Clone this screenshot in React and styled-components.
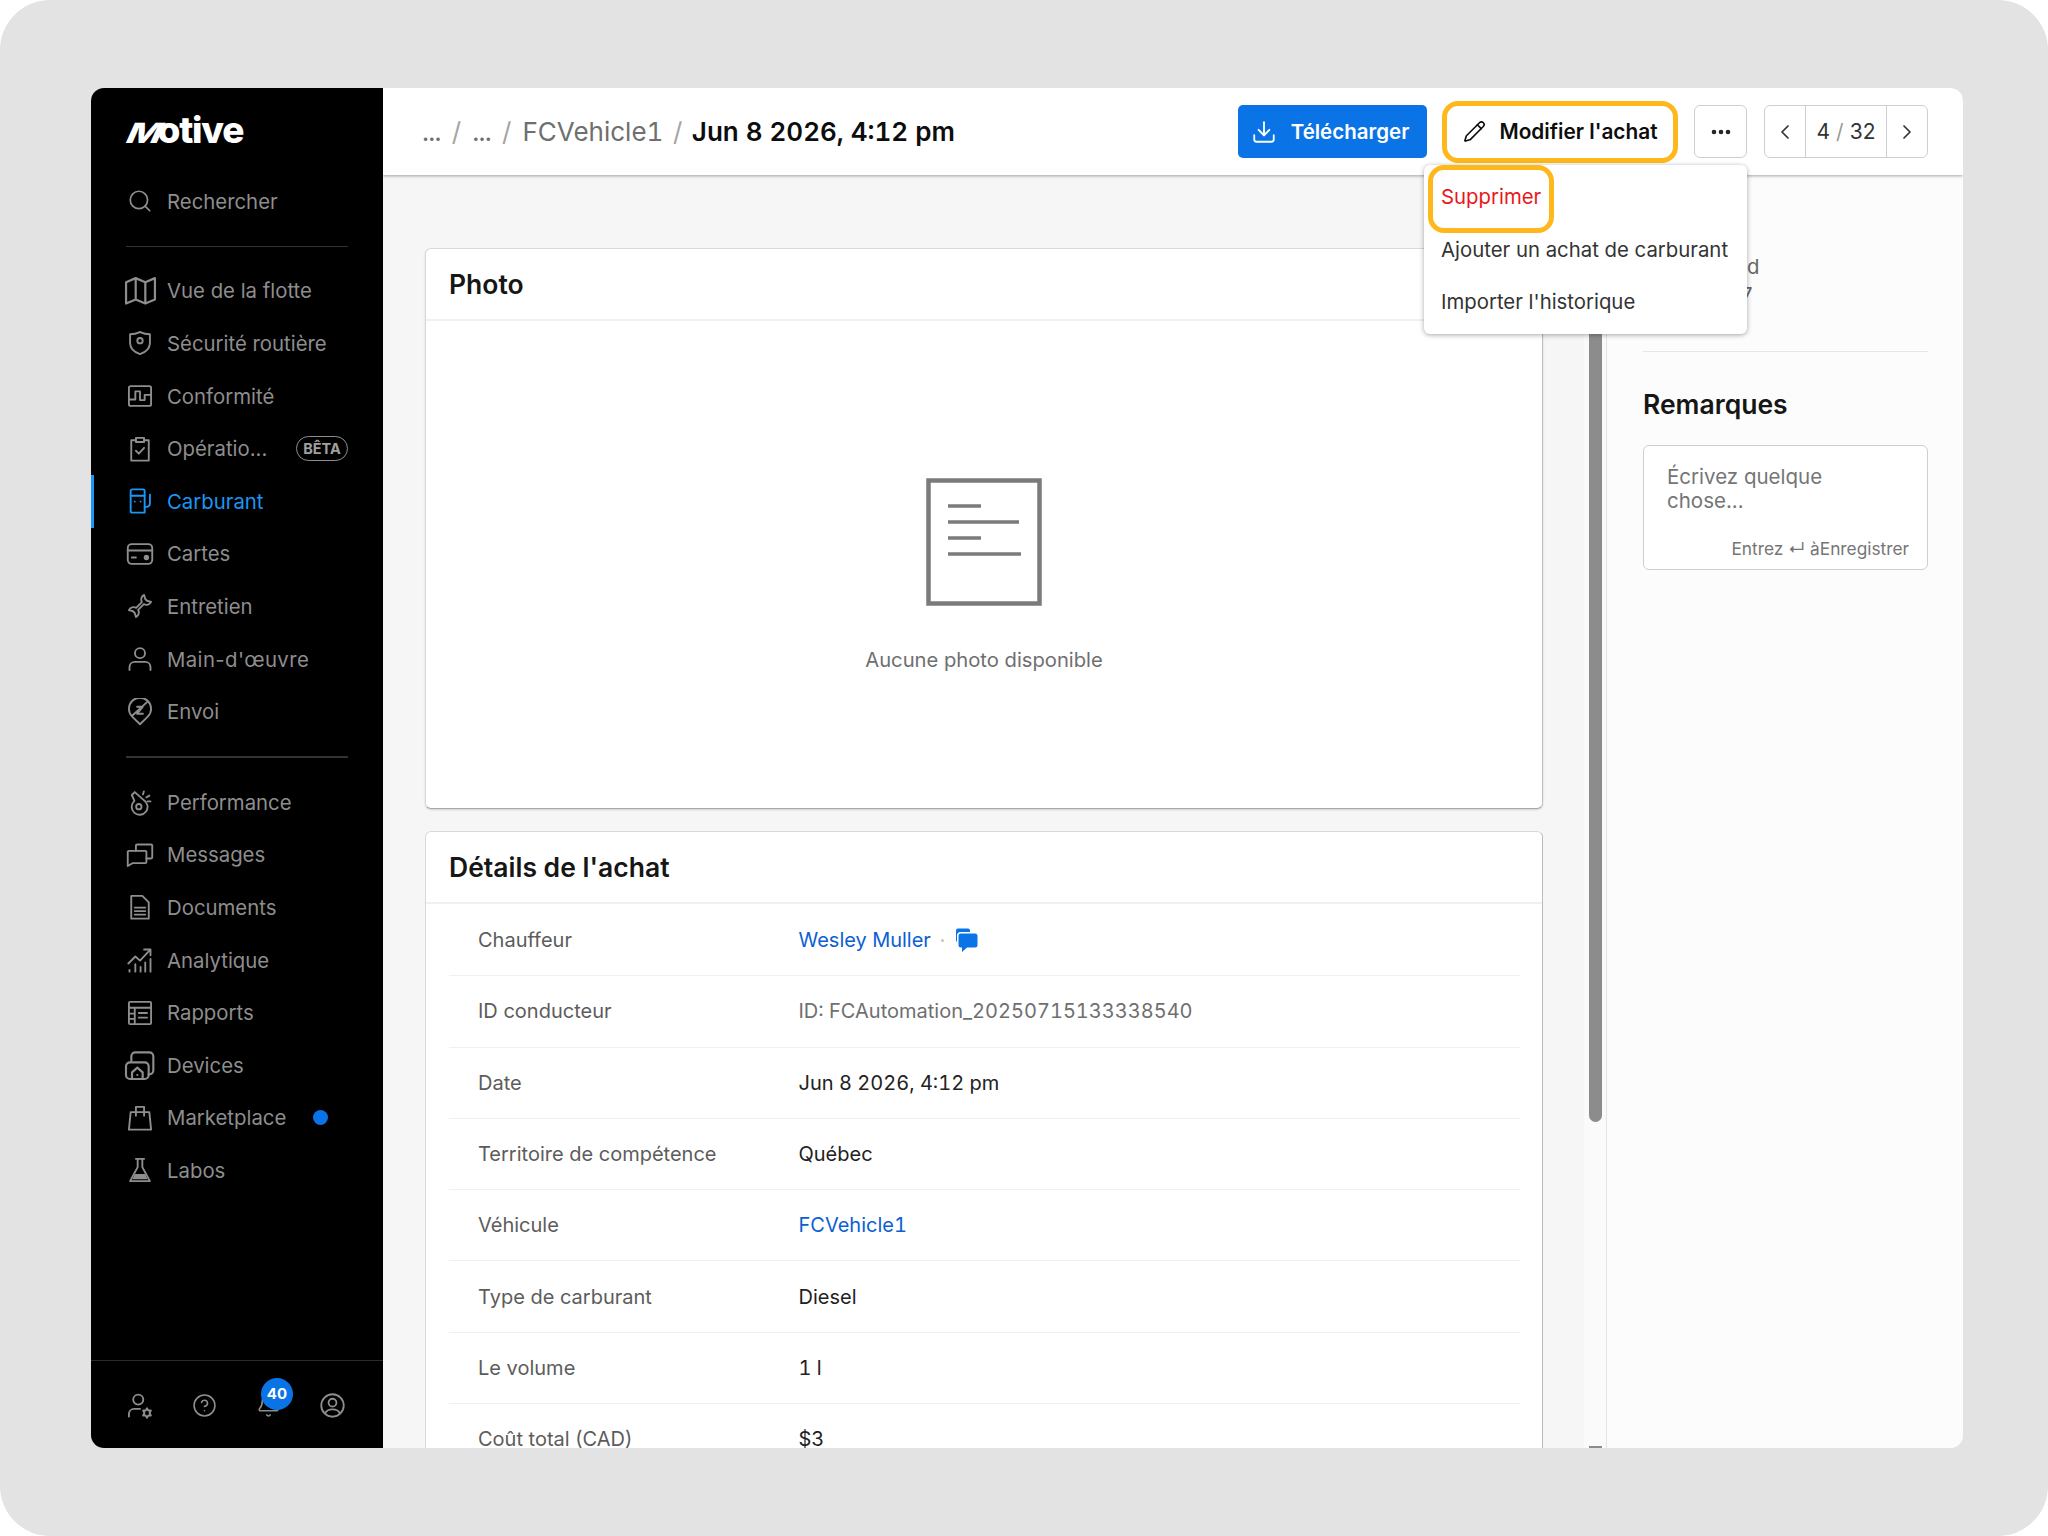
import React from "react";
import styled, { createGlobalStyle } from "styled-components";
import { Search, ChevronLeft, ChevronRight, Ellipsis, Pencil, Download, CircleHelp, Bell } from "lucide-react";

const GlobalStyle = createGlobalStyle`
  html, body { margin: 0; padding: 0; background: #ffffff; }
  body { font-family: Inter, "Noto Sans", "Liberation Sans", sans-serif; }
  * { box-sizing: border-box; }
`;

const Icon = ({ children, size = 28 }) => (
  <svg width={size} height={size} viewBox="0 0 24 24" fill="none" stroke="currentColor" strokeWidth="1.6" strokeLinecap="round" strokeLinejoin="round" style={{ flexShrink: 0 }}>
    {children}
  </svg>
);

const icons = {
  map: (
    <path d="M1.5 6 8.5 3l7 3 7-3v15.5l-7 3-7-3-7 3ZM8.5 3v15.5M15.5 6v15.5" />
  ),
  shield: (
    <>
      <path d="M3.5 4.5C9 4.5 10 3.500 12 2.500c2 1 3 2 8.500 2V12c0 5-4 8-8.500 9.500C7.500 20 3.500 17 3.500 12Z" />
      <circle cx="12" cy="10" r="2.300" />
    </>
  ),
  compliance: (
    <>
      <rect x="2.500" y="3.500" width="19" height="17" rx="1.500" />
      <path d="M2.500 15H8V8h4v7.500h4V11h5.500" />
    </>
  ),
  clipboard: (
    <>
      <path d="M8.500 4.500H4.500V22h15V4.500h-4" />
      <path d="M8.500 2.500h7v3.500h-7Z" />
      <path d="m8.500 13.500 2.500 2.500 4.500-5" />
    </>
  ),
  fuel: (
    <>
      <path d="M4 3.500A1.500 1.500 0 0 1 5.500 2h9A1.500 1.500 0 0 1 16 3.500V22H5.500A1.500 1.500 0 0 1 4 20.500Z" />
      <path d="M4 7.500h12M7.500 12.500h.01M12.500 12.500h.01" />
      <path d="M16 17h1.500c2 0 3-1 3-3V6.500" />
    </>
  ),
  card: (
    <>
      <rect x="1.500" y="3.500" width="21" height="17" rx="3.500" />
      <path d="M1.500 9h21M5 15h3.500" />
      <circle cx="17.500" cy="15" r="1.500" fill="currentColor" />
    </>
  ),
  wrench: (
    <path d="M15.500 2.500A4.500 4.500 0 0 0 13.580 8.720L8.720 13.580A4.500 4.500 0 0 0 2.500 15.500L6 16.500L7.500 18L8.500 21.500A4.500 4.500 0 0 0 10.420 15.280L15.280 10.420A4.500 4.500 0 0 0 21.500 8.500L18 7.500L16.500 6Z" />
  ),
  user: (
    <>
      <circle cx="12" cy="7" r="4.300" />
      <path d="M3 21.500V19c0-2.800 2-4.500 4.500-4.500h9c2.500 0 4.500 1.700 4.500 4.500v2.500" />
    </>
  ),
  dispatch: (
    <>
      <path d="M12 22.500 5.300 16A9.500 9.500 0 1 1 18.700 16Z" />
      <path d="M9.500 7.500h5l-5 6h5M5.500 15 18 3.500" />
    </>
  ),
  performance: (
    <>
      <path d="M5 6 7.500 3.500 15 10.200A6.800 6.800 0 1 1 7.200 11Z" />
      <circle cx="11" cy="16" r="2.300" />
      <path d="m14.500 5.500.8-2.500M17.500 8l2.500-1.500M18.500 11.500h2.500" />
    </>
  ),
  messages: (
    <>
      <path d="M8.500 8.500V4a1 1 0 0 1 1-1h12a1 1 0 0 1 1 1v10a1 1 0 0 1-1 1H17.500" />
      <path d="M2.500 8.500h14a1 1 0 0 1 1 1V18a1 1 0 0 1-1 1H5.500l-4 2.500v-12a1 1 0 0 1 1-1Z" />
    </>
  ),
  documents: (
    <>
      <path d="M4.500 2.500H14l5.500 5.500v14h-15Z" />
      <path d="M7.500 12.500h9M7.500 15.500h9M7.500 18.500h9" />
    </>
  ),
  analytics: (
    <>
      <path d="M2 15 8 9l4 3.500L20.500 3.500M15.500 3h5.500v5" />
      <path d="M3 20.500v1.500M8 15.500V22M12.500 18v4M16.500 14v8M21 11v11" />
    </>
  ),
  reports: (
    <>
      <rect x="2.500" y="2.500" width="19" height="19" rx="1" />
      <path d="M2.500 7.500h19M7.500 7.500v14M2.500 12.500h5M2.500 17h5M11 12h7M11 16h7" />
    </>
  ),
  devices: (
    <>
      <path d="M5.500 9V5.500A3 3 0 0 1 8.500 2.500H19A3 3 0 0 1 22 5.500V16a3 3 0 0 1-3 3h-.5" />
      <rect x="1.500" y="10" width="17" height="12.500" rx="3" />
      <path d="M6 22.500v-5l4-3.500 4 3.500v5" />
      <path d="M10 19.500h.01" />
    </>
  ),
  bag: (
    <>
      <path d="M4 7h16l1.500 15h-19Z" />
      <path d="M8.500 10V2.500h7V10" />
    </>
  ),
  flask: (
    <>
      <path d="M8.500 2.500h7M10 2.500v7L3.500 21.500h17L14 9.500v-7" />
      <path d="M7.500 15.500h9l2 4.500h-13Z" fill="currentColor" stroke="none" />
    </>
  ),
  userGear: (
    <>
      <circle cx="10.500" cy="6.500" r="4.300" />
      <path d="M2.500 21v-2c0-2.800 2-4.500 4.500-4.500h5" />
      <path d="m18 14 1.100 1.900h2.200l-1.100 2.100 1.100 2.100h-2.200L18 22l-1.100-1.900h-2.200l1.100-2.100-1.100-2.100h2.200Z" />
    </>
  ),
  userCircle: (
    <>
      <circle cx="12" cy="12" r="10" />
      <circle cx="12" cy="9.500" r="3.500" />
      <path d="M5.500 19c1-2.500 3-3.500 6.500-3.500s5.500 1 6.500 3.500" />
    </>
  ),
};

const firstNav = [
  { icon: "map", label: "Vue de la flotte", size: 33 },
  { icon: "shield", label: "Sécurité routière" },
  { icon: "compliance", label: "Conformité" },
  { icon: "clipboard", label: "Opératio...", beta: true },
  { icon: "fuel", label: "Carburant", active: true },
  { icon: "card", label: "Cartes" },
  { icon: "wrench", label: "Entretien" },
  { icon: "user", label: "Main-d'œuvre", wideHyphen: true },
  { icon: "dispatch", label: "Envoi" },
];

const secondNav = [
  { icon: "performance", label: "Performance" },
  { icon: "messages", label: "Messages" },
  { icon: "documents", label: "Documents" },
  { icon: "analytics", label: "Analytique" },
  { icon: "reports", label: "Rapports" },
  { icon: "devices", label: "Devices", size: 32 },
  { icon: "bag", label: "Marketplace", dot: true },
  { icon: "flask", label: "Labos" },
];

const details = [
  { label: "Chauffeur", value: "Wesley Muller", kind: "link", chat: true },
  { label: "ID conducteur", value: "ID: FCAutomation_20250715133338540", kind: "muted" },
  { label: "Date", value: "Jun 8 2026, 4:12 pm" },
  { label: "Territoire de compétence", value: "Québec" },
  { label: "Véhicule", value: "FCVehicle1", kind: "link" },
  { label: "Type de carburant", value: "Diesel" },
  { label: "Le volume", value: "1 l" },
  { label: "Coût total (CAD)", value: "$3" },
];

const NavList = ({ items }) => (
  <div>
    {items.map((item) => (
      <NavItem key={item.label} $active={item.active}>
        <IconSlot>
          <Icon size={item.size}>{icons[item.icon]}</Icon>
        </IconSlot>
        <NavLabel $wideHyphen={item.wideHyphen}>{item.label}</NavLabel>
        {item.beta && <BetaTag>BÊTA</BetaTag>}
        {item.dot && <BlueDot />}
      </NavItem>
    ))}
  </div>
);

export default function App() {
  return (
    <Page>
      <GlobalStyle />
      <AppWindow>
        <Sidebar>
          <Logo>
            <LogoM>M</LogoM>otive
          </Logo>
          <NavItem>
            <IconSlot>
              <Search size={26} strokeWidth={1.6} />
            </IconSlot>
            <NavLabel>Rechercher</NavLabel>
          </NavItem>
          <NavDivider />
          <NavList items={firstNav} />
          <NavDivider $thick />
          <NavList items={secondNav} />
          <SidebarFooter>
            <FooterIcon>
              <Icon>{icons.userGear}</Icon>
            </FooterIcon>
            <FooterIcon>
              <CircleHelp size={25} strokeWidth={1.5} />
            </FooterIcon>
            <FooterIcon>
              <Bell size={25} strokeWidth={1.5} />
              <CountBadge>40</CountBadge>
            </FooterIcon>
            <FooterIcon>
              <Icon size={27}>{icons.userCircle}</Icon>
            </FooterIcon>
          </SidebarFooter>
        </Sidebar>

        <Main>
          <TopBar>
            <Breadcrumbs>
              <Dots>...</Dots>
              <Slash>/</Slash>
              <Dots>...</Dots>
              <Slash>/</Slash>
              <Crumb>FCVehicle1</Crumb>
              <Slash $tight>/</Slash>
              <CurrentCrumb>Jun 8 2026, 4:12 pm</CurrentCrumb>
            </Breadcrumbs>
            <Actions>
              <PrimaryButton>
                <Download size={26} strokeWidth={1.7} />
                Télécharger
              </PrimaryButton>
              <EditWrap>
                <EditButton>
                  <Pencil size={23} strokeWidth={1.7} />
                  Modifier l'achat
                </EditButton>
                <Menu>
                  <MenuItem $danger>Supprimer</MenuItem>
                  <MenuItem>Ajouter un achat de carburant</MenuItem>
                  <MenuItem>Importer l'historique</MenuItem>
                </Menu>
              </EditWrap>
              <MoreButton>
                <Ellipsis size={24} strokeWidth={2.6} />
              </MoreButton>
              <Pager>
                <PagerArrow>
                  <ChevronLeft size={24} strokeWidth={1.7} />
                </PagerArrow>
                <PagerCount>
                  4 <PagerSlash>/</PagerSlash> 32
                </PagerCount>
                <PagerArrow>
                  <ChevronRight size={24} strokeWidth={1.7} />
                </PagerArrow>
              </Pager>
            </Actions>
          </TopBar>

          <Body>
            <ScrollArea>
              <PhotoCard>
                <CardHeader>Photo</CardHeader>
                <PhotoBody>
                  <svg width="116" height="128" viewBox="0 0 116 128" fill="none" stroke="#7b7b7b">
                    <rect x="2.500" y="2.500" width="111" height="123" strokeWidth="4.500" />
                    <path d="M22 28h33M22 44h71M22 60h33M22 76h73" strokeWidth="3.500" />
                  </svg>
                  <PhotoCaption>Aucune photo disponible</PhotoCaption>
                </PhotoBody>
              </PhotoCard>
              <DetailsCard>
                <CardHeader>Détails de l'achat</CardHeader>
                <DetailRows>
                  {details.map((row) => (
                    <DetailRow key={row.label}>
                      <DetailLabel>{row.label}</DetailLabel>
                      <DetailValue $kind={row.kind}>{row.value}</DetailValue>
                      {row.chat && (
                        <>
                          <MiniDot />
                          <svg width="24" height="24" viewBox="0 0 24 24" fill="#0a74e6">
                            <path d="M2 2.500A2 2 0 0 1 4 .5h10a2 2 0 0 1 2 2V4H6.500A3.500 3.500 0 0 0 3 7.500V14a2 2 0 0 1-1-1.700Z" />
                            <path d="M7 5.500h14a2.500 2.500 0 0 1 2.500 2.500v9a2.500 2.500 0 0 1-2.500 2.500H13L8 24v-4.500H7A2.500 2.500 0 0 1 4.500 17V8A2.500 2.500 0 0 1 7 5.500Z" />
                          </svg>
                        </>
                      )}
                    </DetailRow>
                  ))}
                </DetailRows>
              </DetailsCard>
            </ScrollArea>

            <ScrollTrack>
              <ScrollThumb />
              <ScrollStub />
            </ScrollTrack>

            <SidePanel>
              <HiddenMeta>
                <MetaLine $indent={104}>d</MetaLine>
                <MetaLine $indent={98}>7</MetaLine>
              </HiddenMeta>
              <PanelDivider />
              <PanelTitle>Remarques</PanelTitle>
              <NoteBox>
                <NotePlaceholder>Écrivez quelque chose...</NotePlaceholder>
                <NoteHint>Entrez ↵ àEnregistrer</NoteHint>
              </NoteBox>
            </SidePanel>
          </Body>
        </Main>
      </AppWindow>
    </Page>
  );
}

const Page = styled.div`
  width: 2048px;
  height: 1536px;
  background: #e3e3e3;
  border-radius: 50px;
  padding: 88px 85px 88px 91px;
`;

const AppWindow = styled.div`
  display: flex;
  height: 100%;
  border-radius: 13px;
  overflow: hidden;
  background: #fcfcfc;
`;

const Sidebar = styled.aside`
  width: 292px;
  flex-shrink: 0;
  display: flex;
  flex-direction: column;
  background: #000000;
  color: #8e8e8e;
`;

const Logo = styled.div`
  height: 87px;
  padding: 22px 0 0 31px;
  color: #ffffff;
  font-size: 37px;
  line-height: 40px;
  font-weight: 800;
  letter-spacing: -1.2px;
`;

const LogoM = styled.span`
  display: inline-block;
  font-size: 28px;
  line-height: 28px;
  letter-spacing: 0;
  transform: skewX(-24deg) scaleX(1.32);
  transform-origin: left bottom;
  margin-right: 9px;
`;

const NavItem = styled.div`
  position: relative;
  display: flex;
  align-items: center;
  gap: 13px;
  height: 52.600px;
  padding-left: 35px;
  padding-right: 35px;
  font-size: 20.350px;
  color: ${(p) => (p.$active ? "#1a96f5" : "#8e8e8e")};

  ${(p) =>
    p.$active &&
    `&::before {
      content: "";
      position: absolute;
      left: 0;
      top: 0;
      bottom: 0;
      width: 3px;
      background: #1a96f5;
    }`}
`;

const IconSlot = styled.span`
  width: 28px;
  height: 28px;
  display: flex;
  align-items: center;
  justify-content: center;
  flex-shrink: 0;
`;

const NavLabel = styled.span`
  flex: 1;
  white-space: nowrap;
  letter-spacing: ${(p) => (p.$wideHyphen ? "0.4px" : "normal")};
`;

const BetaTag = styled.span`
  width: 52px;
  height: 25px;
  display: flex;
  align-items: center;
  justify-content: center;
  border: 1px solid #8e8e8e;
  border-radius: 13px;
  font-size: 14.500px;
  font-weight: 700;
  color: #a0a0a0;
`;

const BlueDot = styled.span`
  width: 15px;
  height: 15px;
  margin-right: 20px;
  border-radius: 50%;
  background: #0a74e6;
`;

const NavDivider = styled.div`
  height: ${(p) => (p.$thick ? "2px" : "1px")};
  margin: 18px 35px;
  background: #333333;
`;

const SidebarFooter = styled.div`
  margin-top: auto;
  height: 88px;
  display: flex;
  align-items: center;
  gap: 38px;
  padding: 2px 0 0 36px;
  border-top: 1px solid #2a2a2a;
`;

const FooterIcon = styled.span`
  position: relative;
  width: 26px;
  height: 28px;
  display: flex;
  align-items: center;
  justify-content: center;
`;

const CountBadge = styled.span`
  position: absolute;
  left: 6px;
  top: -14px;
  width: 32px;
  height: 32px;
  display: flex;
  align-items: center;
  justify-content: center;
  border-radius: 50%;
  background: #0a74e6;
  color: #ffffff;
  font-size: 15px;
  font-weight: 700;
`;

const Main = styled.main`
  flex: 1;
  min-width: 0;
  display: flex;
  flex-direction: column;
`;

const TopBar = styled.header`
  position: relative;
  z-index: 2;
  height: 87px;
  flex-shrink: 0;
  display: flex;
  align-items: center;
  justify-content: space-between;
  padding: 0 35px 0 39px;
  background: #ffffff;
  box-shadow: 0 1px 3px rgba(0, 0, 0, 0.35);
`;

const Breadcrumbs = styled.nav`
  display: flex;
  align-items: center;
  font-size: 26px;
  font-variant-numeric: tabular-nums;
`;

const Crumb = styled.span`
  color: #6f6f6f;
`;

const Dots = styled(Crumb)`
  letter-spacing: -0.7px;
`;

const Slash = styled.span`
  margin: 0 ${(p) => (p.$tight ? "9.500px" : "11px")};
  color: #a5a5a5;
`;

const CurrentCrumb = styled.span`
  color: #0d0d0d;
  font-weight: 600;
`;

const Actions = styled.div`
  display: flex;
  align-items: center;
`;

const PrimaryButton = styled.button`
  height: 53px;
  width: 189px;
  display: flex;
  align-items: center;
  justify-content: center;
  gap: 14px;
  padding: 0 5px 0 0;
  border: 0;
  border-radius: 5px;
  background: #0a74e6;
  color: #ffffff;
  font-family: inherit;
  font-size: 20.500px;
  font-weight: 600;
`;

const EditWrap = styled.div`
  position: relative;
  margin: 0 16px 0 15px;
`;

const EditButton = styled.button`
  width: 236px;
  height: 62px;
  display: flex;
  align-items: center;
  justify-content: center;
  gap: 14px;
  border: 5px solid #ffb81c;
  border-radius: 16px;
  background: #ffffff;
  color: #0d0d0d;
  font-family: inherit;
  font-size: 20.800px;
  font-weight: 600;
`;

const Menu = styled.div`
  position: absolute;
  z-index: 5;
  left: -18px;
  top: 64px;
  width: 323px;
  height: 169px;
  padding-top: 6px;
  background: #ffffff;
  border-radius: 6px;
  box-shadow: 0 1px 5px rgba(0, 0, 0, 0.35);
`;

const MenuItem = styled.div`
  position: relative;
  display: flex;
  align-items: center;
  height: 52.400px;
  padding-left: 17px;
  font-size: 20.350px;
  color: ${(p) => (p.$danger ? "#e8161a" : "#333333")};

  ${(p) =>
    p.$danger &&
    `&::after {
      content: "";
      box-sizing: border-box;
      position: absolute;
      left: 4px;
      top: -6px;
      width: 126px;
      height: 68px;
      border: 5px solid #ffb81c;
      border-radius: 16px;
    }`}
`;

const MoreButton = styled.button`
  width: 53px;
  height: 53px;
  display: flex;
  align-items: center;
  justify-content: center;
  background: #ffffff;
  border: 1px solid #cfcfcf;
  border-radius: 6px;
  color: #222222;
`;

const Pager = styled.div`
  width: 164px;
  height: 53px;
  margin-left: 17px;
  display: flex;
  border: 1px solid #cfcfcf;
  border-radius: 6px;
`;

const PagerArrow = styled.span`
  width: 40px;
  display: flex;
  align-items: center;
  justify-content: center;
  color: #333333;
`;

const PagerCount = styled.span`
  flex: 1;
  display: flex;
  align-items: center;
  justify-content: center;
  gap: 6px;
  border-left: 1px solid #cfcfcf;
  border-right: 1px solid #cfcfcf;
  font-size: 21px;
  color: #333333;
`;

const PagerSlash = styled.span`
  color: #9a9a9a;
`;

const Body = styled.div`
  flex: 1;
  min-height: 0;
  display: flex;
`;

const ScrollArea = styled.div`
  width: 1201px;
  flex-shrink: 0;
  padding: 73px 41px 0 42px;
  background: #f6f6f6;
  overflow: hidden;
`;

const Card = styled.section`
  background: #ffffff;
  border: 1px solid #d9d9d9;
  border-right-color: #bdbdbd;
  border-radius: 6px;
`;

const PhotoCard = styled(Card)`
  height: 561px;
  border-bottom-color: #a8a8a8;
  box-shadow: 0 1px 2px rgba(0, 0, 0, 0.15);
`;

const DetailsCard = styled(Card)`
  margin-top: 22px;
`;

const CardHeader = styled.h2`
  height: 72px;
  margin: 0;
  padding-left: 23px;
  display: flex;
  align-items: center;
  border-bottom: 2px solid #f0f0f0;
  font-size: 26.500px;
  font-weight: 600;
  color: #161616;
`;

const PhotoBody = styled.div`
  display: flex;
  flex-direction: column;
  align-items: center;
  padding-top: 157px;
`;

const PhotoCaption = styled.div`
  margin-top: 41px;
  font-size: 20.200px;
  color: #6f6f6f;
`;

const DetailRows = styled.div`
  padding: 1px 22px 0 23px;
`;

const DetailRow = styled.div`
  height: 71.300px;
  display: flex;
  align-items: center;
  padding-left: 29px;
  border-bottom: 1px solid #f1f1f1;
`;

const DetailLabel = styled.span`
  width: 320.500px;
  font-size: 20px;
  color: #5c5c5c;
`;

const valueColors = { link: "#0b5fd3", muted: "#6f6f6f" };

const DetailValue = styled.span`
  font-size: 20px;
  font-variant-numeric: tabular-nums;
  color: ${(p) => valueColors[p.$kind] || "#222222"};
`;

const MiniDot = styled.span`
  width: 3px;
  height: 3px;
  margin: 0 10px;
  border-radius: 50%;
  background: #c4c4c4;
`;

const ScrollTrack = styled.div`
  width: 23px;
  flex-shrink: 0;
  display: flex;
  flex-direction: column;
  padding: 15px 0 0 5px;
  background: #fafafa;
  border-right: 1px solid #e4e4e4;
`;

const ScrollThumb = styled.div`
  width: 13px;
  height: 932px;
  border-radius: 0 0 7px 7px;
  background: #8c8c8c;
`;

const ScrollStub = styled.div`
  width: 13px;
  height: 2px;
  margin-top: auto;
  background: #8c8c8c;
`;

const SidePanel = styled.aside`
  flex: 1;
  padding: 78px 35px 0 36px;
  background: #fcfcfc;
`;

const HiddenMeta = styled.div`
  font-size: 20.350px;
  line-height: 28px;
  color: #666666;
`;

const MetaLine = styled.div`
  padding-left: ${(p) => p.$indent}px;
`;

const PanelDivider = styled.div`
  height: 1px;
  margin-top: 42px;
  background: #e6e6e6;
`;

const PanelTitle = styled.h3`
  margin: 35px 0 24px;
  font-size: 26.500px;
  line-height: 34px;
  font-weight: 600;
  color: #161616;
`;

const NoteBox = styled.div`
  height: 125px;
  display: flex;
  flex-direction: column;
  padding: 19px 18px 0 23px;
  background: #ffffff;
  border: 1px solid #cfcfcf;
  border-radius: 6px;
`;

const NotePlaceholder = styled.div`
  max-width: 190px;
  font-size: 20.500px;
  line-height: 23.500px;
  color: #757575;
`;

const NoteHint = styled.div`
  margin-top: 26px;
  text-align: right;
  font-size: 17.300px;
  color: #757575;
  white-space: nowrap;
`;
